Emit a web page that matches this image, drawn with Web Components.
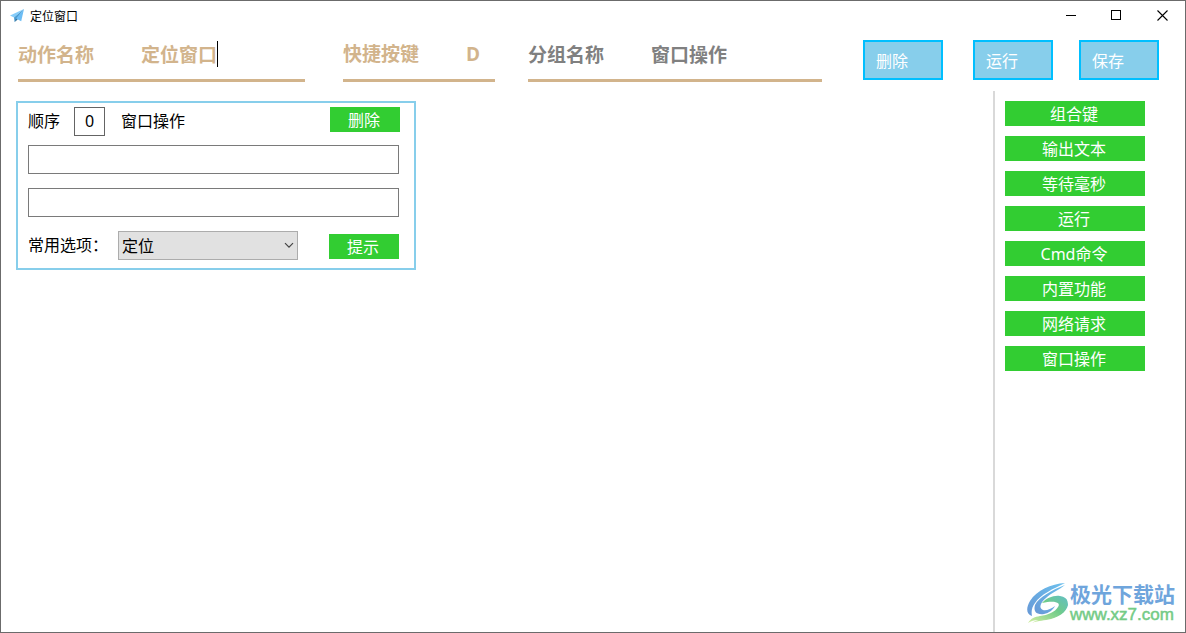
<!DOCTYPE html>
<html lang="zh-CN">
<head>
<meta charset="utf-8">
<title>定位窗口</title>
<style>
html, body { height: 100%; margin: 0; }
body { font: 16px/24px "Noto Sans", "Noto Sans CJK SC", sans-serif; color: #000; background: #fff; overflow: hidden; }
</style>
</head>
<body>
<action-window></action-window>
<script>
class Base extends HTMLElement {
  constructor() {
    super();
    this.attachShadow({ mode: "open" }).innerHTML =
      `<style>*{box-sizing:border-box}input,button,select{font:inherit;color:inherit;margin:0;border-radius:0;outline:0}:host{box-sizing:border-box}</style>` + this.view();
  }
  attr(name, fallback = "") { return this.getAttribute(name) ?? fallback; }
}

customElements.define("title-bar", class extends Base {
  view() {
    return `<style>
      :host { display: flex; align-items: center; height: 29px; padding-left: 9px; font-size: 12px; line-height: 16px; font-family: "Noto Sans CJK SC", sans-serif; }
      .logo { width: 14px; height: 14px; margin-right: 6px; }
      .name { flex: 1; }
      button { width: 46px; height: 29px; padding: 0; border: 0; background: none; display: grid; place-items: center; }
      button svg { width: 11px; height: 11px; fill: none; stroke: #000; shape-rendering: crispEdges; }
      button .x { shape-rendering: auto; stroke-width: 1.1; }
    </style>
    <svg class="logo" viewBox="0 0 14 14" aria-hidden="true">
      <path d="M14 0 0 6.4l4 2z" fill="#86cdfa"/><path d="M14 0 4 8.4l.6 4.6 2-3z" fill="#4a9bd0"/><path d="M14 0 6 9.4l5.2 2.8z" fill="#6cbdf5"/><path d="M4.6 13 6 9.4l1.8 1z" fill="#34749f"/>
    </svg>
    <span class="name"><slot></slot></span>
    <button aria-label="最小化"><svg viewBox="0 0 11 11"><path d="M1 5.5h10"/></svg></button>
    <button aria-label="最大化"><svg viewBox="0 0 11 11"><path d="M.5.5h9v9h-9z"/></svg></button>
    <button aria-label="关闭"><svg class="x" viewBox="0 0 11 11"><path d="M.5.5l10 10M10.5.5l-10 10"/></svg></button>`;
  }
});

customElements.define("line-field", class extends Base {
  view() {
    return `<style>
      :host { display: flex; align-items: flex-start; min-width: 0; height: 41px; color: tan; font: bold 19px/26px "Noto Sans CJK SC", sans-serif; border-bottom: 3px solid tan; }
      :host([muted]) { color: gray; }
      label { flex: 0 0 123px; white-space: nowrap; }
      .value { min-width: 0; height: 26px; display: flex; }
      :host([active]) .value { border-right: 1px solid #000; }
      input { width: 76px; min-width: 0; height: 26px; padding: 0; border: 0; background: none; }
      :host([short]) { font-family: "Open Sans", "Noto Sans CJK SC", sans-serif; }
      :host([short]) input { width: 20px; }
    </style>
    <label for="v">${this.attr("label")}</label><span class="value"><input id="v" value="${this.attr("value")}"></span>`;
  }
});

customElements.define("blue-button", class extends Base {
  view() {
    return `<style>
      :host { display: block; }
      button { display: block; width: 80px; height: 40px; padding: 2px 0 0 11px; border: 2px solid deepskyblue; background: skyblue; color: #fff; text-align: left; }
    </style><button><slot></slot></button>`;
  }
});

customElements.define("green-button", class extends Base {
  view() {
    return `<style>
      :host { display: block; width: 70px; }
      button { display: block; width: 100%; height: 25px; padding: 1px 2px 0 0; border: 0; background: limegreen; color: #fff; line-height: 24px; }
    </style><button><slot></slot></button>`;
  }
});

customElements.define("action-header", class extends Base {
  view() {
    return `<style>
      :host { display: flex; padding: 10px 26px 9px 17px; align-items: flex-start; }
      .fields { flex: 1; display: flex; min-width: 0; padding-top: 1px; }
      line-field { flex: 287 1 0; margin-right: 38px; }
      line-field[short] { flex-grow: 152; margin-right: 33px; }
      line-field[muted] { flex-grow: 294; margin-right: 41px; }
      .buttons { display: flex; height: 40px; gap: 26px; }
      .buttons :first-child { margin-right: 4px; }
    </style>
    <div class="fields">
      <line-field active label="动作名称" value="定位窗口"></line-field>
      <line-field short label="快捷按键" value="D"></line-field>
      <line-field muted label="分组名称" value="窗口操作"></line-field>
    </div>
    <div class="buttons"><blue-button>删除</blue-button><blue-button>运行</blue-button><blue-button>保存</blue-button></div>`;
  }
});

customElements.define("step-card", class extends Base {
  view() {
    return `<style>
      :host { display: grid; gap: 14px; width: 400px; padding: 4px 15px 8px 10px; border: 2px solid skyblue; }
      .row { display: flex; align-items: flex-start; }
      .top { height: 29px; margin: 0 -1px -5px 0; }
      label, .kind { line-height: 28px; white-space: nowrap; }
      input { display: block; width: 100%; height: 29px; padding: 0 4px; border: 1px solid #7a7a7a; background: #fff; }
      .order { width: 31px; padding: 0 0 2px; margin: 0 16px 0 14px; text-align: center; border-color: #646464; }
      .kind { flex: 1; }
      .opt label { width: 90px; }
      .select { position: relative; width: 180px; margin-right: 31px; }
      select { display: block; appearance: none; width: 100%; height: 29px; padding: 0 20px 0 3px; border: 1px solid #acacac; background: #e1e1e1; }
      .select svg { position: absolute; right: 4px; top: 11px; width: 10px; height: 7px; fill: none; stroke: #444; stroke-width: 1.2; pointer-events: none; }
      .opt green-button { padding-top: 3px; }
    </style>
    <div class="row top"><label for="o">顺序</label><input class="order" id="o" value="${this.attr("order", "0")}"><span class="kind"><slot></slot></span><green-button>删除</green-button></div>
    <input aria-label="窗口标题">
    <input aria-label="窗口类名">
    <div class="row opt"><label for="s">常用选项：</label><div class="select"><select id="s"><option>定位</option></select><svg viewBox="0 0 10 7"><path d="M1 1.2l4 4 4-4"/></svg></div><green-button>提示</green-button></div>`;
  }
});

customElements.define("command-list", class extends Base {
  view() {
    const names = ["组合键", "输出文本", "等待毫秒", "运行", "Cmd命令", "内置功能", "网络请求", "窗口操作"];
    return `<style>
      :host { display: flex; flex-direction: column; gap: 10px; width: 192px; padding: 10px 40px 10px 10px; border-left: 2px solid #d9d9d9; }
      green-button { width: 100%; }
    </style>${names.map(n => `<green-button>${n}</green-button>`).join("")}`;
  }
});

customElements.define("site-mark", class extends Base {
  view() {
    return `<style>
      :host { display: flex; align-items: center; }
      svg { width: 43px; height: 42px; }
      .name { font: bold 21px/22px "Noto Sans CJK SC", sans-serif; color: #6fa5dc; }
      .url { font: 17px/22px "Liberation Sans", Arial, sans-serif; color: #74cb86; -webkit-text-stroke: 0.5px #74cb86; }
      div div { white-space: nowrap; }
    </style>
    <svg viewBox="0 0 43 42" aria-hidden="true">
      <defs>
        <linearGradient id="a" x1="1" y1="0" x2="0" y2="1"><stop stop-color="#6cc0ee"/><stop offset="1" stop-color="#6798d6"/></linearGradient>
        <linearGradient id="b" x1="1" y1="0" x2="0" y2="1"><stop stop-color="#62bfc4"/><stop offset=".4" stop-color="#70cb8a"/><stop offset="1" stop-color="#d3eea0"/></linearGradient>
      </defs>
      <path fill="url(#a)" d="M38 0C24 1 10 7 3 18c-4 7-4 13 2 15-1-5 0-9 3-13C14 11 26 6 38 0z"/>
      <path fill="url(#a)" d="M38 2C25 7 12 14 8 22c-2 7 2 10 9 9 5-1 9-4 11-8-4 3-9 5-12 4-5-2-2-8 3-12C24 10 32 7 38 2z"/>
      <path fill="url(#b)" d="M15 20c4-5 12-8 18-7 9 1 10 9 4 15-7 7-18 9-26 9-4 0-7 1-10 3 3-5 7-6 12-7 8-1 15-4 18-9 3-4-2-7-16-4z"/>
      <path fill="url(#b)" d="M41 19c1 8-7 14-17 17-7 2-12 1-19 4 5-4 12-4 18-5 8-2 15-7 18-16z"/>
    </svg>
    <div><div class="name">极光下载站</div><div class="url">www.xz7.com</div></div>`;
  }
});

customElements.define("action-window", class extends Base {
  view() {
    return `<style>
      :host { position: relative; display: flex; flex-direction: column; min-height: 100vh; border: 1px solid #6b6b6b; background: #fff; }
      main { flex: 1; display: flex; justify-content: space-between; }
      .steps { flex: 1; padding: 10px 15px; }
      site-mark { position: absolute; right: 10px; bottom: 6px; }
    </style>
    <title-bar>定位窗口</title-bar>
    <action-header></action-header>
    <main><div class="steps"><step-card order="0">窗口操作</step-card></div><command-list></command-list></main>
    <site-mark></site-mark>`;
  }
});
</script>
</body>
</html>
